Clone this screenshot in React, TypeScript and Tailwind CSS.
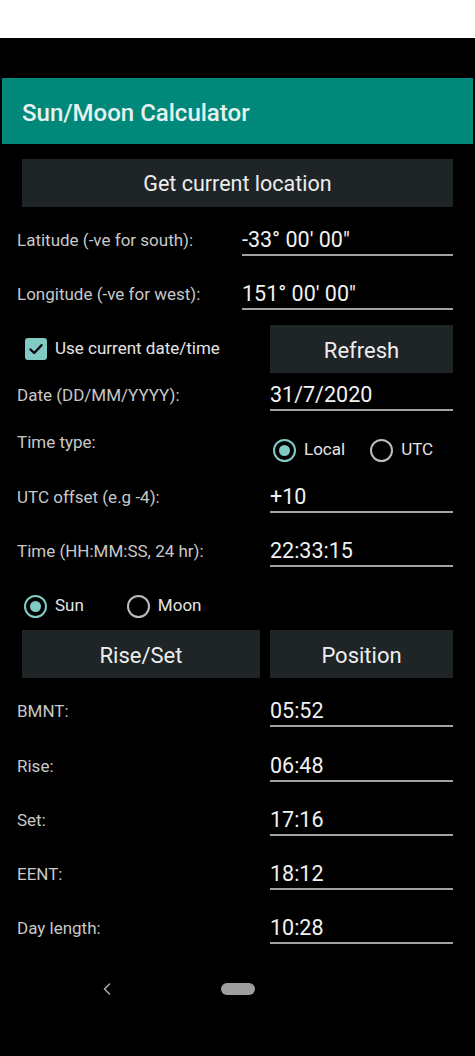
import React from "react";

function Field({
  label,
  value,
  wide,
  mt,
}: {
  label: string;
  value: string;
  wide: boolean;
  mt: string;
}) {
  return (
    <div className={`flex items-start ${mt}`}>
      <div
        className={`${wide ? "w-[225px]" : "w-[253px]"} h-[24px] leading-[24px] text-[17px] text-[#c8c8c8] whitespace-nowrap`}
      >
        {label}
      </div>
      <div className="flex-1">
        <div className="h-[24px] leading-[24px] text-[21.5px] text-[#f1f1f1] whitespace-nowrap">
          {value}
        </div>
        <div className="mt-[2px] h-[2px] bg-[#a3a3a3]" />
      </div>
    </div>
  );
}

function Radio({ checked }: { checked: boolean }) {
  return (
    <div
      className={`w-[23px] h-[23px] rounded-full border-[2.5px] flex items-center justify-center shrink-0 ${
        checked ? "border-[#80cbc4]" : "border-[#bdbdbd]"
      }`}
    >
      {checked && <div className="w-[11px] h-[11px] rounded-full bg-[#80cbc4]" />}
    </div>
  );
}

function Btn({ children, w }: { children: React.ReactNode; w: string }) {
  return (
    <div
      className={`${w} h-[48px] bg-[#1f2427] flex items-center justify-center pt-[2px] text-[22px] text-[#ededed] shadow-[0_1px_2px_rgba(0,0,0,0.6)]`}
    >
      {children}
    </div>
  );
}

export default function App() {
  return (
    <div className="w-[475px] h-[1056px] bg-black overflow-hidden font-['Roboto','Noto_Sans',sans-serif]">
      <div className="h-[38px] bg-white" />
      <div className="h-[40px]" />
      <div className="mx-[2px] h-[66px] bg-[#00897b] flex items-center pl-[20px] pt-[3px] text-[24px] font-medium text-[#e6f2f0]">
        Sun/Moon Calculator
      </div>
      <div className="pl-[17px] pr-[22px]">
        <div className="mt-[15px] ml-[5px]">
          <Btn w="w-[431px]">
            <span className="text-[21.5px]">Get current location</span>
          </Btn>
        </div>

        <Field label="Latitude (-ve for south):" value={`-33° 00' 00"`} wide mt="mt-[21px]" />
        <Field label="Longitude (-ve for west):" value={`151° 00' 00"`} wide mt="mt-[26px]" />

        <div className="mt-[15px] flex items-center h-[48px]">
          <div className="w-[253px] flex items-center">
            <div className="ml-[8px] w-[22px] h-[22px] rounded-[3px] bg-[#80cbc4] flex items-center justify-center">
              <svg width="16" height="16" viewBox="0 0 16 16">
                <path
                  d="M2.5 8.5 L6.2 12 L13.5 4.2"
                  fill="none"
                  stroke="#0a0a0a"
                  strokeWidth="2.4"
                  strokeLinecap="round"
                  strokeLinejoin="round"
                />
              </svg>
            </div>
            <span className="ml-[8px] text-[17px] text-[#e4e4e4] whitespace-nowrap">
              Use current date/time
            </span>
          </div>
          <Btn w="w-[183px]">Refresh</Btn>
        </div>

        <Field label="Date (DD/MM/YYYY):" value="31/7/2020" wide={false} mt="mt-[10px]" />

        <div className="mt-[15px] flex items-start">
          <div className="w-[253px] mt-[4px] h-[24px] leading-[24px] text-[17px] text-[#c8c8c8]">
            Time type:
          </div>
          <div className="h-[48px] flex items-center">
            <div className="ml-[3px]">
              <Radio checked />
            </div>
            <span className="ml-[8px] text-[17px] text-[#e4e4e4]">Local</span>
            <div className="ml-[25px]">
              <Radio checked={false} />
            </div>
            <span className="ml-[8px] text-[17px] text-[#e4e4e4]">UTC</span>
          </div>
        </div>

        <Field label="UTC offset (e.g -4):" value="+10" wide={false} mt="mt-[11px]" />
        <Field label="Time (HH:MM:SS, 24 hr):" value="22:33:15" wide={false} mt="mt-[26px]" />

        <div className="mt-[27px] h-[24px] flex items-center">
          <div className="ml-[7px]">
            <Radio checked />
          </div>
          <span className="ml-[8px] text-[17px] text-[#e4e4e4]">Sun</span>
          <div className="ml-[43px]">
            <Radio checked={false} />
          </div>
          <span className="ml-[8px] text-[17px] text-[#e4e4e4]">Moon</span>
        </div>

        <div className="mt-[12px] ml-[5px] flex gap-[10px]">
          <Btn w="w-[238px]">Rise/Set</Btn>
          <Btn w="w-[183px]">Position</Btn>
        </div>

        <Field label="BMNT:" value="05:52" wide={false} mt="mt-[21px]" />
        <Field label="Rise:" value="06:48" wide={false} mt="mt-[27px]" />
        <Field label="Set:" value="17:16" wide={false} mt="mt-[26px]" />
        <Field label="EENT:" value="18:12" wide={false} mt="mt-[26px]" />
        <Field label="Day length:" value="10:28" wide={false} mt="mt-[26px]" />
      </div>

      <div className="mt-[39px] h-[12px] flex items-center">
        <svg className="ml-[103px]" width="8" height="12" viewBox="0 0 8 12">
          <path
            d="M6.5 1 L1.5 6 L6.5 11"
            fill="none"
            stroke="#a8a8a8"
            strokeWidth="1.6"
            strokeLinecap="round"
            strokeLinejoin="round"
          />
        </svg>
        <div className="ml-[110px] w-[34px] h-[12px] rounded-full bg-[#9e9e9e]" />
      </div>
    </div>
  );
}
